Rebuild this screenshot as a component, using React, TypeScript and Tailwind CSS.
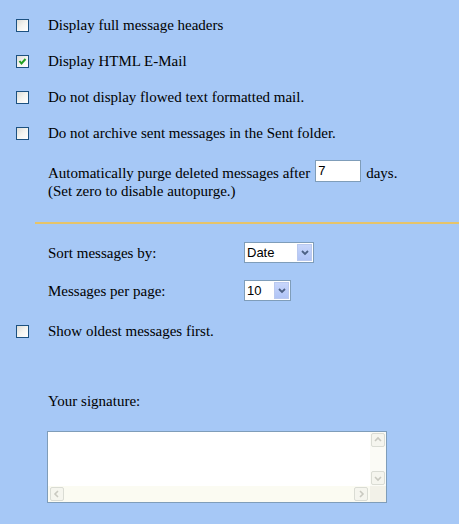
import React from 'react';

const Checkbox: React.FC<{ checked?: boolean }> = ({ checked }) => (
  <span className="relative block w-[13px] h-[13px] shrink-0 border border-[#1c5180] bg-gradient-to-br from-[#dcdcd7] via-[#f4f4f0] to-white">
    {checked && (
      <svg viewBox="0 0 11 11" className="absolute inset-0 w-[11px] h-[11px]">
        <path d="M2.5 5 L4.5 7.5 L8.5 3" fill="none" stroke="#21a121" strokeWidth="2" />
      </svg>
    )}
  </span>
);

const CheckRow: React.FC<{ label: string; checked?: boolean }> = ({ label, checked }) => (
  <div className="flex items-center h-[36px]">
    <span className="ml-[16px]">
      <Checkbox checked={checked} />
    </span>
    <span className="ml-[19px]">{label}</span>
  </div>
);

const FakeSelect: React.FC<{ value: string; wide?: boolean }> = ({ value, wide }) => (
  <div
    className={
      wide
        ? 'w-[70px] h-[21px] flex items-center border border-[#7f9db9] bg-white [font-family:Liberation_Sans,Arial,sans-serif] text-[13px]'
        : 'w-[47px] h-[21px] flex items-center border border-[#7f9db9] bg-white [font-family:Liberation_Sans,Arial,sans-serif] text-[13px]'
    }
  >
    <span className="flex-1 pl-[2px] text-black">{value}</span>
    <span className="w-[15px] h-[17px] mr-[1px] flex items-center justify-center bg-gradient-to-b from-[#c8d6fb] to-[#b0c4f6] border border-[#bac9ef]">
      <svg viewBox="0 0 8 6" className="w-[8px] h-[6px]">
        <path d="M1 1 L4 4 L7 1" fill="none" stroke="#4d6185" strokeWidth="1.8" />
      </svg>
    </span>
  </div>
);

const arrows = {
  up: 'M2 6 L5 3 L8 6',
  down: 'M2 4 L5 7 L8 4',
  left: 'M6 2 L3 5 L6 8',
  right: 'M4 2 L7 5 L4 8',
};

const ScrollBtn: React.FC<{ dir: keyof typeof arrows }> = ({ dir }) => (
  <span className="w-[14px] h-[14px] flex items-center justify-center border border-[#dadcd4] rounded-[2px] bg-[#f5f5ee]">
    <svg viewBox="0 0 10 10" className="w-[10px] h-[10px]">
      <path d={arrows[dir]} fill="none" stroke="#c9c9c0" strokeWidth="1.6" />
    </svg>
  </span>
);

export default function App() {
  return (
    <div className="min-h-screen bg-[#a6c8f6] [font-family:Liberation_Serif,Times_New_Roman,serif] text-[15px] leading-[18px] text-black pt-[7px]">
      <CheckRow label="Display full message headers" />
      <CheckRow label="Display HTML E-Mail" checked />
      <CheckRow label="Do not display flowed text formatted mail." />
      <CheckRow label="Do not archive sent messages in the Sent folder." />

      {/* purge settings */}
      <div className="ml-[48px] mt-[9px]">
        <div className="flex items-start h-[22px]">
          <span className="mt-[4px]">Automatically purge deleted messages after</span>
          <span className="ml-[5px] w-[46px] h-[22px] border border-[#7f9db9] bg-white [font-family:Liberation_Sans,Arial,sans-serif] text-[13px] leading-[20px] pl-[2px]">
            7
          </span>
          <span className="mt-[4px] ml-[5px]">days.</span>
        </div>
        <div>(Set zero to disable autopurge.)</div>
      </div>

      <div className="mt-[22px] ml-[35px] h-[2px] bg-[#e6c46a]" />

      <div className="ml-[48px] mt-[18px] flex items-center">
        <span className="w-[196px]">Sort messages by:</span>
        <FakeSelect value="Date" wide />
      </div>
      <div className="ml-[48px] mt-[17px] flex items-center">
        <span className="w-[196px]">Messages per page:</span>
        <FakeSelect value="10" />
      </div>

      <div className="mt-[21px] flex items-center h-[18px]">
        <span className="ml-[16px]">
          <Checkbox />
        </span>
        <span className="ml-[19px]">Show oldest messages first.</span>
      </div>

      <div className="ml-[48px] mt-[52px]">Your signature:</div>

      <div className="ml-[47px] mt-[21px] w-[340px] h-[72px] border border-[#7f9db9] bg-white flex flex-col">
        <div className="flex flex-1">
          <div className="flex-1" />
          <div className="w-[16px] flex flex-col items-center justify-between py-[1px] bg-[#fbfbf6]">
            <ScrollBtn dir="up" />
            <ScrollBtn dir="down" />
          </div>
        </div>
        <div className="flex h-[16px]">
          <div className="flex-1 flex items-center justify-between px-[2px] bg-[#fbfbf2]">
            <ScrollBtn dir="left" />
            <ScrollBtn dir="right" />
          </div>
          <div className="w-[16px] bg-[#f2f1e8]" />
        </div>
      </div>
    </div>
  );
}
